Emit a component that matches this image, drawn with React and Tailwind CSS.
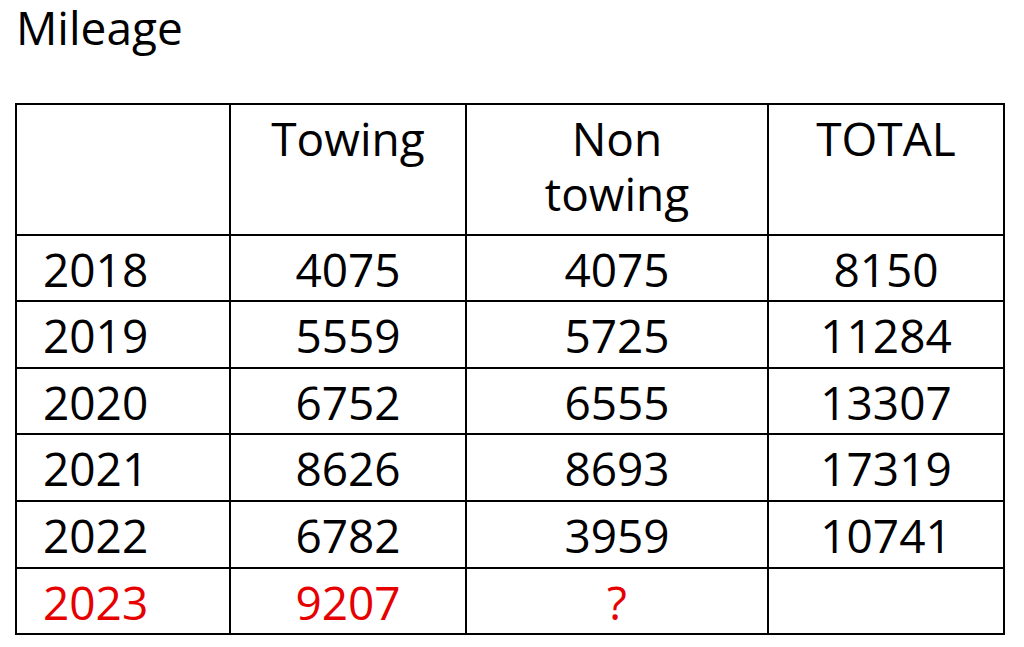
export default function App() {
  const rows = [
    { y: "2018", t: "4075", n: "4075", s: "8150", h: "h-[66px]" },
    { y: "2019", t: "5559", n: "5725", s: "11284", h: "h-[67px]" },
    { y: "2020", t: "6752", n: "6555", s: "13307", h: "h-[66px]" },
    { y: "2021", t: "8626", n: "8693", s: "17319", h: "h-[67px]" },
    { y: "2022", t: "6782", n: "3959", s: "10741", h: "h-[67px]" },
  ];
  const cell = "border-r-2 border-b-2 border-black pt-[6px] leading-[55px]";
  return (
    <div
      className="w-[1024px] h-[647px] bg-white text-black text-[46px] overflow-hidden"
      style={{ fontFamily: '"Open Sans", "Noto Sans", sans-serif' }}
    >
      <div className="h-[103px] pl-[16px] leading-[55px]">Mileage</div>
      <div className="ml-[15px] w-[990px] border-t-2 border-l-2 border-black">
        <div className="flex h-[131px]">
          <div className={`${cell} w-[214px]`}></div>
          <div className={`${cell} w-[236px] text-center`}>Towing</div>
          <div className={`${cell} w-[302px] text-center`}>
            Non
            <br />
            towing
          </div>
          <div className={`${cell} w-[236px] text-center`}>TOTAL</div>
        </div>
        {rows.map((r) => (
          <div key={r.y} className={`flex ${r.h}`}>
            <div className={`${cell} w-[214px] pl-[26px]`}>{r.y}</div>
            <div className={`${cell} w-[236px] text-center`}>{r.t}</div>
            <div className={`${cell} w-[302px] text-center`}>{r.n}</div>
            <div className={`${cell} w-[236px] text-center`}>{r.s}</div>
          </div>
        ))}
        <div className="flex h-[66px] text-[#e60000]">
          <div className={`${cell} w-[214px] pl-[26px]`}>2023</div>
          <div className={`${cell} w-[236px] text-center`}>9207</div>
          <div className={`${cell} w-[302px] text-center`}>?</div>
          <div className={`${cell} w-[236px] text-center`}></div>
        </div>
      </div>
    </div>
  );
}
